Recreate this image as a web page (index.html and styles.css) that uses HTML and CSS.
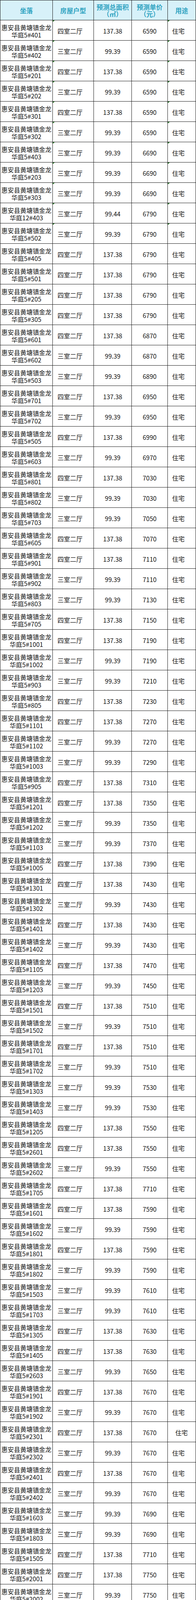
FILE: index.html
```html
<!DOCTYPE html>
<html lang="zh-CN">
<head>
<meta charset="utf-8">
<title>惠安县黄塘镇金龙华庭 预测单价</title>
<link rel="stylesheet" href="styles.css">
</head>
<body>
<table class="sheet">
<colgroup><col class="w1"><col class="w2"><col class="w3"><col class="w4"><col class="w5"></colgroup>
<thead>
<tr class="head"><th>坐落</th><th>房屋户型</th><th>预测总面积<br>（㎡）</th><th>预测单价<br>（元）</th><th>用途</th></tr>
</thead>
<tbody>
<tr class="flag"><td class="loc">惠安县黄塘镇金龙<br>华庭5#401</td><td class="type">四室二厅</td><td>137.38</td><td>6590</td><td class="use">住宅</td></tr>
<tr class="flag"><td class="loc">惠安县黄塘镇金龙<br>华庭5#402</td><td class="type">三室二厅</td><td>99.39</td><td>6590</td><td class="use">住宅</td></tr>
<tr class="flag"><td class="loc">惠安县黄塘镇金龙<br>华庭5#201</td><td class="type">四室二厅</td><td>137.38</td><td>6590</td><td class="use">住宅</td></tr>
<tr class="flag"><td class="loc">惠安县黄塘镇金龙<br>华庭5#202</td><td class="type">三室二厅</td><td>99.39</td><td>6590</td><td class="use">住宅</td></tr>
<tr class="flag"><td class="loc">惠安县黄塘镇金龙<br>华庭5#301</td><td class="type">四室二厅</td><td>137.38</td><td>6590</td><td class="use">住宅</td></tr>
<tr class="flag"><td class="loc">惠安县黄塘镇金龙<br>华庭5#302</td><td class="type">三室二厅</td><td>99.39</td><td>6590</td><td class="use">住宅</td></tr>
<tr class="flag"><td class="loc">惠安县黄塘镇金龙<br>华庭5#403</td><td class="type">三室二厅</td><td>99.39</td><td>6690</td><td class="use">住宅</td></tr>
<tr class="flag"><td class="loc">惠安县黄塘镇金龙<br>华庭5#203</td><td class="type">三室二厅</td><td>99.39</td><td>6690</td><td class="use">住宅</td></tr>
<tr class="flag"><td class="loc">惠安县黄塘镇金龙<br>华庭5#303</td><td class="type">三室二厅</td><td>99.39</td><td>6690</td><td class="use">住宅</td></tr>
<tr class="flag"><td class="loc">惠安县黄塘镇金龙<br>华庭12#403</td><td class="type">三室二厅</td><td>99.44</td><td>6790</td><td class="use">住宅</td></tr>
<tr class="flag"><td class="loc">惠安县黄塘镇金龙<br>华庭5#502</td><td class="type">三室二厅</td><td>99.39</td><td>6790</td><td class="use">住宅</td></tr>
<tr><td class="loc">惠安县黄塘镇金龙<br>华庭5#405</td><td class="type">四室二厅</td><td>137.38</td><td>6790</td><td class="use">住宅</td></tr>
<tr><td class="loc">惠安县黄塘镇金龙<br>华庭5#501</td><td class="type">四室二厅</td><td>137.38</td><td>6790</td><td class="use">住宅</td></tr>
<tr><td class="loc">惠安县黄塘镇金龙<br>华庭5#205</td><td class="type">四室二厅</td><td>137.38</td><td>6790</td><td class="use">住宅</td></tr>
<tr><td class="loc">惠安县黄塘镇金龙<br>华庭5#305</td><td class="type">四室二厅</td><td>137.38</td><td>6790</td><td class="use">住宅</td></tr>
<tr><td class="loc">惠安县黄塘镇金龙<br>华庭5#601</td><td class="type">四室二厅</td><td>137.38</td><td>6870</td><td class="use">住宅</td></tr>
<tr><td class="loc">惠安县黄塘镇金龙<br>华庭5#602</td><td class="type">三室二厅</td><td>99.39</td><td>6870</td><td class="use">住宅</td></tr>
<tr><td class="loc">惠安县黄塘镇金龙<br>华庭5#503</td><td class="type">三室二厅</td><td>99.39</td><td>6890</td><td class="use">住宅</td></tr>
<tr><td class="loc">惠安县黄塘镇金龙<br>华庭5#701</td><td class="type">四室二厅</td><td>137.38</td><td>6950</td><td class="use">住宅</td></tr>
<tr><td class="loc">惠安县黄塘镇金龙<br>华庭5#702</td><td class="type">三室二厅</td><td>99.39</td><td>6950</td><td class="use">住宅</td></tr>
<tr><td class="loc">惠安县黄塘镇金龙<br>华庭5#505</td><td class="type">四室二厅</td><td>137.38</td><td>6990</td><td class="use">住宅</td></tr>
<tr><td class="loc">惠安县黄塘镇金龙<br>华庭5#603</td><td class="type">三室二厅</td><td>99.39</td><td>6970</td><td class="use">住宅</td></tr>
<tr><td class="loc">惠安县黄塘镇金龙<br>华庭5#801</td><td class="type">四室二厅</td><td>137.38</td><td>7030</td><td class="use">住宅</td></tr>
<tr><td class="loc">惠安县黄塘镇金龙<br>华庭5#802</td><td class="type">三室二厅</td><td>99.39</td><td>7030</td><td class="use">住宅</td></tr>
<tr><td class="loc">惠安县黄塘镇金龙<br>华庭5#703</td><td class="type">三室二厅</td><td>99.39</td><td>7050</td><td class="use">住宅</td></tr>
<tr><td class="loc">惠安县黄塘镇金龙<br>华庭5#605</td><td class="type">四室二厅</td><td>137.38</td><td>7070</td><td class="use">住宅</td></tr>
<tr><td class="loc">惠安县黄塘镇金龙<br>华庭5#901</td><td class="type">四室二厅</td><td>137.38</td><td>7110</td><td class="use">住宅</td></tr>
<tr><td class="loc">惠安县黄塘镇金龙<br>华庭5#902</td><td class="type">三室二厅</td><td>99.39</td><td>7110</td><td class="use">住宅</td></tr>
<tr><td class="loc">惠安县黄塘镇金龙<br>华庭5#803</td><td class="type">三室二厅</td><td>99.39</td><td>7130</td><td class="use">住宅</td></tr>
<tr><td class="loc">惠安县黄塘镇金龙<br>华庭5#705</td><td class="type">四室二厅</td><td>137.38</td><td>7150</td><td class="use">住宅</td></tr>
<tr><td class="loc">惠安县黄塘镇金龙<br>华庭5#1001</td><td class="type">四室二厅</td><td>137.38</td><td>7190</td><td class="use">住宅</td></tr>
<tr><td class="loc">惠安县黄塘镇金龙<br>华庭5#1002</td><td class="type">三室二厅</td><td>99.39</td><td>7190</td><td class="use">住宅</td></tr>
<tr><td class="loc">惠安县黄塘镇金龙<br>华庭5#903</td><td class="type">三室二厅</td><td>99.39</td><td>7210</td><td class="use">住宅</td></tr>
<tr><td class="loc">惠安县黄塘镇金龙<br>华庭5#805</td><td class="type">四室二厅</td><td>137.38</td><td>7230</td><td class="use">住宅</td></tr>
<tr><td class="loc">惠安县黄塘镇金龙<br>华庭5#1101</td><td class="type">四室二厅</td><td>137.38</td><td>7270</td><td class="use">住宅</td></tr>
<tr><td class="loc">惠安县黄塘镇金龙<br>华庭5#1102</td><td class="type">三室二厅</td><td>99.39</td><td>7270</td><td class="use">住宅</td></tr>
<tr><td class="loc">惠安县黄塘镇金龙<br>华庭5#1003</td><td class="type">三室二厅</td><td>99.39</td><td>7290</td><td class="use">住宅</td></tr>
<tr><td class="loc">惠安县黄塘镇金龙<br>华庭5#905</td><td class="type">四室二厅</td><td>137.38</td><td>7310</td><td class="use">住宅</td></tr>
<tr><td class="loc">惠安县黄塘镇金龙<br>华庭5#1201</td><td class="type">四室二厅</td><td>137.38</td><td>7350</td><td class="use">住宅</td></tr>
<tr><td class="loc">惠安县黄塘镇金龙<br>华庭5#1202</td><td class="type">三室二厅</td><td>99.39</td><td>7350</td><td class="use">住宅</td></tr>
<tr><td class="loc">惠安县黄塘镇金龙<br>华庭5#1103</td><td class="type">三室二厅</td><td>99.39</td><td>7370</td><td class="use">住宅</td></tr>
<tr><td class="loc">惠安县黄塘镇金龙<br>华庭5#1005</td><td class="type">四室二厅</td><td>137.38</td><td>7390</td><td class="use">住宅</td></tr>
<tr><td class="loc">惠安县黄塘镇金龙<br>华庭5#1301</td><td class="type">四室二厅</td><td>137.38</td><td>7430</td><td class="use">住宅</td></tr>
<tr><td class="loc">惠安县黄塘镇金龙<br>华庭5#1302</td><td class="type">三室二厅</td><td>99.39</td><td>7430</td><td class="use">住宅</td></tr>
<tr><td class="loc">惠安县黄塘镇金龙<br>华庭5#1401</td><td class="type">四室二厅</td><td>137.38</td><td>7430</td><td class="use">住宅</td></tr>
<tr><td class="loc">惠安县黄塘镇金龙<br>华庭5#1402</td><td class="type">三室二厅</td><td>99.39</td><td>7430</td><td class="use">住宅</td></tr>
<tr><td class="loc">惠安县黄塘镇金龙<br>华庭5#1105</td><td class="type">四室二厅</td><td>137.38</td><td>7470</td><td class="use">住宅</td></tr>
<tr><td class="loc">惠安县黄塘镇金龙<br>华庭5#1203</td><td class="type">三室二厅</td><td>99.39</td><td>7450</td><td class="use">住宅</td></tr>
<tr><td class="loc">惠安县黄塘镇金龙<br>华庭5#1501</td><td class="type">四室二厅</td><td>137.38</td><td>7510</td><td class="use">住宅</td></tr>
<tr><td class="loc">惠安县黄塘镇金龙<br>华庭5#1502</td><td class="type">三室二厅</td><td>99.39</td><td>7510</td><td class="use">住宅</td></tr>
<tr><td class="loc">惠安县黄塘镇金龙<br>华庭5#1701</td><td class="type">四室二厅</td><td>137.38</td><td>7510</td><td class="use">住宅</td></tr>
<tr><td class="loc">惠安县黄塘镇金龙<br>华庭5#1702</td><td class="type">三室二厅</td><td>99.39</td><td>7510</td><td class="use">住宅</td></tr>
<tr><td class="loc">惠安县黄塘镇金龙<br>华庭5#1303</td><td class="type">三室二厅</td><td>99.39</td><td>7530</td><td class="use">住宅</td></tr>
<tr><td class="loc">惠安县黄塘镇金龙<br>华庭5#1403</td><td class="type">三室二厅</td><td>99.39</td><td>7530</td><td class="use">住宅</td></tr>
<tr><td class="loc">惠安县黄塘镇金龙<br>华庭5#1205</td><td class="type">四室二厅</td><td>137.38</td><td>7550</td><td class="use">住宅</td></tr>
<tr><td class="loc">惠安县黄塘镇金龙<br>华庭5#2601</td><td class="type">四室二厅</td><td>137.38</td><td>7550</td><td class="use">住宅</td></tr>
<tr><td class="loc">惠安县黄塘镇金龙<br>华庭5#2602</td><td class="type">三室二厅</td><td>99.39</td><td>7550</td><td class="use">住宅</td></tr>
<tr><td class="loc">惠安县黄塘镇金龙<br>华庭5#1705</td><td class="type">四室二厅</td><td>137.38</td><td>7710</td><td class="use">住宅</td></tr>
<tr><td class="loc">惠安县黄塘镇金龙<br>华庭5#1601</td><td class="type">四室二厅</td><td>137.38</td><td>7590</td><td class="use">住宅</td></tr>
<tr><td class="loc">惠安县黄塘镇金龙<br>华庭5#1602</td><td class="type">三室二厅</td><td>99.39</td><td>7590</td><td class="use">住宅</td></tr>
<tr><td class="loc">惠安县黄塘镇金龙<br>华庭5#1801</td><td class="type">四室二厅</td><td>137.38</td><td>7590</td><td class="use">住宅</td></tr>
<tr><td class="loc">惠安县黄塘镇金龙<br>华庭5#1802</td><td class="type">三室二厅</td><td>99.39</td><td>7590</td><td class="use">住宅</td></tr>
<tr><td class="loc">惠安县黄塘镇金龙<br>华庭5#1503</td><td class="type">三室二厅</td><td>99.39</td><td>7610</td><td class="use">住宅</td></tr>
<tr><td class="loc">惠安县黄塘镇金龙<br>华庭5#1703</td><td class="type">三室二厅</td><td>99.39</td><td>7610</td><td class="use">住宅</td></tr>
<tr><td class="loc">惠安县黄塘镇金龙<br>华庭5#1305</td><td class="type">四室二厅</td><td>137.38</td><td>7630</td><td class="use">住宅</td></tr>
<tr><td class="loc">惠安县黄塘镇金龙<br>华庭5#1405</td><td class="type">四室二厅</td><td>137.38</td><td>7630</td><td class="use">住宅</td></tr>
<tr><td class="loc">惠安县黄塘镇金龙<br>华庭5#2603</td><td class="type">三室二厅</td><td>99.39</td><td>7650</td><td class="use">住宅</td></tr>
<tr><td class="loc">惠安县黄塘镇金龙<br>华庭5#1901</td><td class="type">四室二厅</td><td>137.38</td><td>7670</td><td class="use">住宅</td></tr>
<tr><td class="loc">惠安县黄塘镇金龙<br>华庭5#1902</td><td class="type">三室二厅</td><td>99.39</td><td>7670</td><td class="use">住宅</td></tr>
<tr><td class="loc">惠安县黄塘镇金龙<br>华庭5#2301</td><td class="type">四室二厅</td><td>137.38</td><td>7670</td><td class="use use-indent">住宅</td></tr>
<tr><td class="loc">惠安县黄塘镇金龙<br>华庭5#2302</td><td class="type">三室二厅</td><td>99.39</td><td>7670</td><td class="use">住宅</td></tr>
<tr><td class="loc">惠安县黄塘镇金龙<br>华庭5#2401</td><td class="type">四室二厅</td><td>137.38</td><td>7670</td><td class="use">住宅</td></tr>
<tr><td class="loc">惠安县黄塘镇金龙<br>华庭5#2402</td><td class="type">三室二厅</td><td>99.39</td><td>7670</td><td class="use">住宅</td></tr>
<tr><td class="loc">惠安县黄塘镇金龙<br>华庭5#1603</td><td class="type">三室二厅</td><td>99.39</td><td>7690</td><td class="use">住宅</td></tr>
<tr><td class="loc">惠安县黄塘镇金龙<br>华庭5#1803</td><td class="type">三室二厅</td><td>99.39</td><td>7690</td><td class="use">住宅</td></tr>
<tr><td class="loc">惠安县黄塘镇金龙<br>华庭5#1505</td><td class="type">四室二厅</td><td>137.38</td><td>7710</td><td class="use">住宅</td></tr>
<tr><td class="loc">惠安县黄塘镇金龙<br>华庭5#2001</td><td class="type">四室二厅</td><td>137.38</td><td>7750</td><td class="use">住宅</td></tr>
<tr><td class="loc">惠安县黄塘镇金龙<br>华庭5#2002</td><td class="type">三室二厅</td><td>99.39</td><td>7750</td><td class="use">住宅</td></tr>
<tr><td class="loc">惠安县黄塘镇金龙<br>华庭5#2201</td><td class="type">四室二厅</td><td>137.38</td><td>7750</td><td class="use">住宅</td></tr>
<tr><td class="loc">惠安县黄塘镇金龙<br>华庭5#2202</td><td class="type">三室二厅</td><td>99.39</td><td>7750</td><td class="use">住宅</td></tr>
<tr><td class="loc">惠安县黄塘镇金龙<br>华庭5#2501</td><td class="type">四室二厅</td><td>137.38</td><td>7750</td><td class="use">住宅</td></tr>
<tr><td class="loc">惠安县黄塘镇金龙<br>华庭5#2502</td><td class="type">三室二厅</td><td>99.39</td><td>7750</td><td class="use">住宅</td></tr>
<tr><td class="loc">惠安县黄塘镇金龙<br>华庭5#2605</td><td class="type">四室二厅</td><td>137.38</td><td>7750</td><td class="use">住宅</td></tr>
<tr><td class="loc">惠安县黄塘镇金龙<br>华庭5#1903</td><td class="type">三室二厅</td><td>99.39</td><td>7770</td><td class="use">住宅</td></tr>
<tr><td class="loc">惠安县黄塘镇金龙<br>华庭5#2303</td><td class="type">三室二厅</td><td>99.39</td><td>7770</td><td class="use">住宅</td></tr>
<tr><td class="loc">惠安县黄塘镇金龙<br>华庭5#2403</td><td class="type">三室二厅</td><td>99.39</td><td>7770</td><td class="use">住宅</td></tr>
<tr><td class="loc">惠安县黄塘镇金龙<br>华庭5#1605</td><td class="type">四室二厅</td><td>137.38</td><td>7790</td><td class="use">住宅</td></tr>
<tr><td class="loc">惠安县黄塘镇金龙<br>华庭5#1805</td><td class="type">四室二厅</td><td>137.38</td><td>7790</td><td class="use">住宅</td></tr>
<tr><td class="loc">惠安县黄塘镇金龙<br>华庭5#2101</td><td class="type">四室二厅</td><td>137.38</td><td>7830</td><td class="use">住宅</td></tr>
<tr><td class="loc">惠安县黄塘镇金龙<br>华庭5#2102</td><td class="type">三室二厅</td><td>99.39</td><td>7830</td><td class="use">住宅</td></tr>
<tr><td class="loc">惠安县黄塘镇金龙<br>华庭5#2003</td><td class="type">三室二厅</td><td>99.39</td><td>7850</td><td class="use">住宅</td></tr>
<tr><td class="loc">惠安县黄塘镇金龙<br>华庭5#2203</td><td class="type">三室二厅</td><td>99.39</td><td>7850</td><td class="use">住宅</td></tr>
<tr><td class="loc">惠安县黄塘镇金龙<br>华庭5#2503</td><td class="type">三室二厅</td><td>99.39</td><td>7850</td><td class="use">住宅</td></tr>
<tr><td class="loc">惠安县黄塘镇金龙<br>华庭5#1905</td><td class="type">四室二厅</td><td>137.38</td><td>7870</td><td class="use">住宅</td></tr>
<tr><td class="loc">惠安县黄塘镇金龙<br>华庭5#2305</td><td class="type">四室二厅</td><td>137.38</td><td>7870</td><td class="use">住宅</td></tr>
<tr><td class="loc">惠安县黄塘镇金龙<br>华庭5#2405</td><td class="type">四室二厅</td><td>137.38</td><td>7870</td><td class="use">住宅</td></tr>
<tr><td class="loc">惠安县黄塘镇金龙<br>华庭5#2103</td><td class="type">三室二厅</td><td>99.39</td><td>7930</td><td class="use">住宅</td></tr>
<tr class="flag"><td class="loc">惠安县黄塘镇金龙<br>华庭5#2005</td><td class="type">四室二厅</td><td>137.38</td><td>7950</td><td class="use">住宅</td></tr>
<tr class="flag"><td class="loc">惠安县黄塘镇金龙<br>华庭5#2205</td><td class="type">四室二厅</td><td>137.38</td><td>7950</td><td class="use">住宅</td></tr>
<tr class="flag"><td class="loc">惠安县黄塘镇金龙<br>华庭5#2505</td><td class="type">四室二厅</td><td>137.38</td><td>7950</td><td class="use">住宅</td></tr>
<tr class="flag"><td class="loc">惠安县黄塘镇金龙<br>华庭5#2105</td><td class="type">四室二厅</td><td>137.38</td><td>8030</td><td class="use">住宅</td></tr>
</tbody>
</table>
</body>
</html>
```

FILE: styles.css
```css
html, body {
  margin: 0;
  padding: 0;
  background: #ffffff;
}

.sheet {
  width: 501px;
  table-layout: fixed;
  border-collapse: separate;
  border-spacing: 0;
  border-left: 1px solid #1b1b1b;
  border-top: 1px solid #1b1b1b;
  font-family: "Noto Sans CJK SC", "Noto Sans", sans-serif;
  color: #151515;
}

.w1 { width: 134px; }
.w2 { width: 105px; }
.w3 { width: 97px; }
.w4 { width: 92px; }
.w5 { width: 72px; }

.sheet tr {
  height: 52px;
}

.sheet td,
.sheet th {
  position: relative;
  box-sizing: border-box;
  height: 52px;
  padding: 4px 0 0 0;
  border-right: 1px solid #1b1b1b;
  border-bottom: 1px solid #1b1b1b;
  vertical-align: middle;
  text-align: center;
  font-size: 16px;
  line-height: 19px;
  font-weight: 400;
  white-space: nowrap;
  overflow: hidden;
}

.sheet tr.head {
  height: 51px;
  background: #d7f1f9;
}

.sheet .head th {
  height: 51px;
  padding-top: 2px;
  font-size: 16.5px;
  line-height: 18px;
  font-weight: 700;
  color: #2fa3c1;
}

.sheet td.type {
  text-align: left;
  padding-left: 12px;
}

.sheet td.use {
  text-align: left;
  padding-left: 11px;
}

.sheet td.use-indent {
  padding-left: 19px;
}

.flag .type::before,
.flag .use::before {
  content: "";
  position: absolute;
  top: 0;
  left: 0;
  width: 0;
  height: 0;
  border-top: 4px solid #2e7a2e;
  border-right: 5px solid transparent;
}
```
